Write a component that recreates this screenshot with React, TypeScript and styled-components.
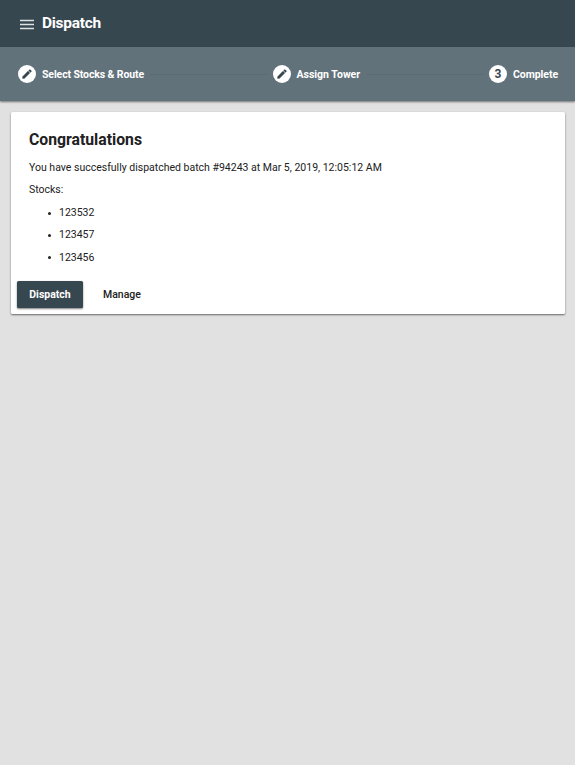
import React from "react";
import styled, { createGlobalStyle } from "styled-components";

const GlobalStyle = createGlobalStyle`
  * { box-sizing: border-box; }
  body {
    margin: 0;
    background: #e1e1e1;
    color: #212121;
    font: 400 10.5px/15px Roboto, sans-serif;
    overflow: hidden;
  }
`;

const Page = styled.div`
  display: flex;
  flex-direction: column;
  min-height: 100vh;
`;

const Header = styled.header`
  box-shadow: 0 1px 2px rgba(0, 0, 0, 0.5);
  color: #fff;
`;

const Toolbar = styled.div`
  display: flex;
  align-items: center;
  gap: 8px;
  height: 47px;
  padding: 0 18px;
  background: #37474f;
`;

const MenuButton = styled.button`
  display: flex;
  width: 16px;
  height: 16px;
  padding: 0;
  border: 0;
  background: none;
  color: #dce1e3;
`;

const Title = styled.h1`
  margin: 0 0 1px;
  font-size: 15.5px;
  line-height: 20px;
  font-weight: 700;
  letter-spacing: -0.28px;
`;

const Stepper = styled.nav`
  display: flex;
  align-items: center;
  height: 54px;
  padding: 0 17px 0 18px;
  background: #62727b;
`;

const Step = styled.div`
  display: flex;
  align-items: center;
  gap: 6px;
`;

const StepIcon = styled.span`
  display: flex;
  align-items: center;
  justify-content: center;
  width: 18px;
  height: 18px;
  border-radius: 50%;
  background: #fff;
  color: #37474f;
  font-size: 12px;
  font-weight: 700;
`;

const StepLabel = styled.span<{ $width: number; $tracking: number }>`
  width: ${(p) => p.$width}px;
  white-space: nowrap;
  font-weight: 700;
  letter-spacing: ${(p) => p.$tracking}px;
`;

const Connector = styled.span`
  flex: 1;
  height: 1px;
  margin: 0 6px;
  background: #5b6b74;
`;

const Card = styled.main`
  height: 202px;
  margin: 11px 10px 0 11px;
  padding: 18px 6px 6px;
  border-radius: 1.5px;
  background: #fff;
  box-shadow: 0 1px 2px rgba(0, 0, 0, 0.55);
`;

const Content = styled.section`
  padding: 0 12px;
`;

const Heading = styled.h2`
  margin: 0 0 10px;
  font-size: 15.75px;
  line-height: 20px;
  font-weight: 700;
`;

const Message = styled.p`
  margin: 0 0 7px;
`;

const StockList = styled.ul`
  display: grid;
  gap: 7.4px;
  margin: 8px 0 0;
  padding: 0 0 0 19px;
  list-style: none;
`;

const StockItem = styled.li`
  display: flex;
  align-items: center;
  gap: 8px;

  &::before {
    content: "";
    width: 3px;
    height: 3px;
    margin-top: 1px;
    border-radius: 50%;
    background: #212121;
  }
`;

const Actions = styled.footer`
  display: flex;
  gap: 8px;
  margin-top: 16.2px;
`;

const ActionButton = styled.button<{ $raised?: boolean }>`
  min-width: ${(p) => (p.$raised ? "66px" : "0")};
  height: 27px;
  padding: 0 12px;
  border: 0;
  border-radius: 1.5px;
  background: ${(p) => (p.$raised ? "#37474f" : "transparent")};
  color: ${(p) => (p.$raised ? "#fff" : "#212121")};
  box-shadow: ${(p) => (p.$raised ? "0 1px 2px rgba(0, 0, 0, 0.5)" : "none")};
  font: ${(p) => (p.$raised ? 700 : 500)} 10.5px/27px Roboto, sans-serif;
`;

const MenuIcon = () => (
  <svg width="16" height="16" viewBox="0 0 16 16" aria-hidden="true">
    <path d="M2 4.5h14M2 8.5h14M2 12.5h14" stroke="currentColor" strokeWidth="1.7" />
  </svg>
);

const PencilIcon = () => (
  <svg width="12" height="12" viewBox="0 0 24 24" fill="currentColor" aria-hidden="true">
    <path d="M3 17.25V21h3.75L17.81 9.94l-3.75-3.75L3 17.25zM20.71 7.04a1 1 0 0 0 0-1.41l-2.34-2.34a1 1 0 0 0-1.41 0l-1.83 1.83 3.75 3.75 1.83-1.83z" stroke="currentColor" strokeWidth="0.6" />
  </svg>
);

const steps = [
  { label: "Select Stocks & Route", width: 102, tracking: -0.11, done: true },
  { label: "Assign Tower", width: 64, tracking: 0, done: true },
  { label: "Complete", width: 45, tracking: -0.05, done: false },
];

const stocks = ["123532", "123457", "123456"];

export default function App() {
  return (
    <>
      <GlobalStyle />
      <Page>
        <Header>
          <Toolbar>
            <MenuButton aria-label="Menu"><MenuIcon /></MenuButton>
            <Title>Dispatch</Title>
          </Toolbar>
          <Stepper>
            {steps.map((step, index) => (
              <React.Fragment key={step.label}>
                {index > 0 && <Connector />}
                <Step>
                  <StepIcon>{step.done ? <PencilIcon /> : index + 1}</StepIcon>
                  <StepLabel $width={step.width} $tracking={step.tracking}>{step.label}</StepLabel>
                </Step>
              </React.Fragment>
            ))}
          </Stepper>
        </Header>
        <Card>
          <Content>
            <Heading>Congratulations</Heading>
            <Message>You have succesfully dispatched batch #94243 at Mar 5, 2019, 12:05:12 AM</Message>
            <Message>Stocks:</Message>
            <StockList>
              {stocks.map((stock) => <StockItem key={stock}>{stock}</StockItem>)}
            </StockList>
          </Content>
          <Actions>
            <ActionButton $raised>Dispatch</ActionButton>
            <ActionButton>Manage</ActionButton>
          </Actions>
        </Card>
      </Page>
    </>
  );
}
